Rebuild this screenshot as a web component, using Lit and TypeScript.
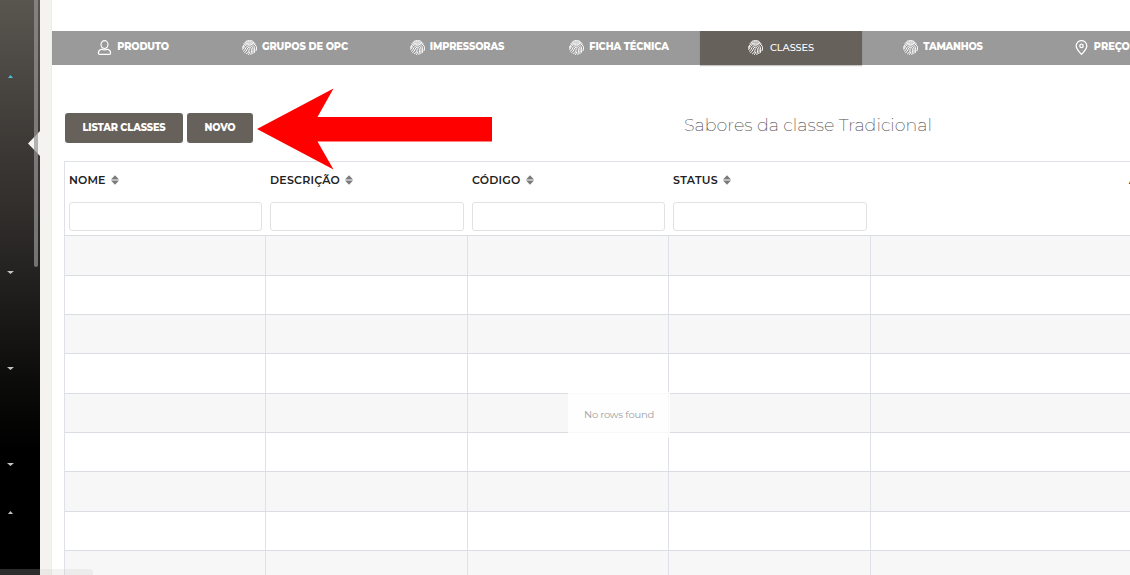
import { LitElement, html, svg, css } from "lit";
import { customElement, property } from "lit/decorators.js";

/** Single-line label whose tracking is adjusted so it spans a given width. */
@customElement("fit-label")
class FitLabel extends LitElement {
  @property({ type: Number }) width = 0;
  @property() text = "";
  static styles = css`
    :host { display: inline-block; white-space: pre; }
    .t { display: inline-block; }
  `;
  render() {
    return html`<span class="t">${this.text}</span>`;
  }
  updated() {
    const el = this.renderRoot.querySelector(".t") as HTMLElement;
    el.style.letterSpacing = "0";
    const natural = el.getBoundingClientRect().width;
    const gap = (this.width - natural) / this.text.length;
    el.style.letterSpacing = `${gap.toFixed(3)}px`;
  }
}

const userIcon = svg`<g fill="none" stroke="#fff" stroke-width="1.2">
  <ellipse cx="7.5" cy="4.600" rx="3.500" ry="3.900"/>
  <path d="M4.300 9.300C2.400 9.900 1.400 11.200 1.400 13c0 .8.5 1.300 1.300 1.300h9.600c.8 0 1.300-.5 1.300-1.300 0-1.800-1-3.100-2.900-3.700-2 .8-4.400.8-6.400 0z"/></g>`;

const printIcon = svg`<g fill="none" stroke="#fff" stroke-width="1" stroke-linecap="round">
  <path d="M4 1.300C6.200.3 8.800.3 11 1.300"/>
  <path d="M1.700 3.700C4.600 1 10.400 1 13.300 3.700"/>
  <path d="M.6 7C1.600 2.200 12.400 1.300 14.300 6.500 14.800 8.500 14.500 9.500 14 10.700"/>
  <path d="M.8 9.500C2.300 8.300 1.700 4.200 7.500 4.200c4.800 0 5.600 3.600 5 8.200"/>
  <path d="M1.500 11.200C4.200 10 2.800 5.700 7.500 5.700c4 0 3.900 4 3.300 7.900"/>
  <path d="M2.700 12.700C5.800 11.300 4.400 7.200 7.500 7.200c2.500 0 2.200 3.800 1.400 7.300"/>
  <path d="M4.500 13.800C6.800 12.800 6.800 10.800 7.300 8.900"/>
  <path d="M6.600 14.500C7.200 13.800 7.400 13 7.600 12"/>
  <path d="M.7 8.300C.8 7.600 1.100 6.800 1.500 6"/></g>`;

const pinIcon = svg`<g fill="none" stroke="#fff" stroke-width="1.300">
  <path d="M7.500 14.400C4.500 11.200 2.200 8.600 2.200 5.900a5.300 5.300 0 0 1 10.600 0c0 2.700-2.300 5.300-5.300 8.500z"/>
  <circle cx="7.500" cy="5.900" r="1.700"/></g>`;

const tabs = [
  { text: "PRODUTO", width: 51.5, icon: userIcon },
  { text: "GRUPOS DE OPC", width: 86, icon: printIcon },
  { text: "IMPRESSORAS", width: 74.5, icon: printIcon },
  { text: "FICHA TÉCNICA", width: 79.5, icon: printIcon },
  { text: "CLASSES", width: 44, icon: printIcon, active: true },
  { text: "TAMANHOS", width: 59.5, icon: printIcon },
  { text: "PREÇOS", width: 42.5, icon: pinIcon },
];

const columns = [
  { text: "NOME", width: 36.5 },
  { text: "DESCRIÇÃO", width: 70 },
  { text: "CÓDIGO", width: 48.5 },
  { text: "STATUS", width: 45 },
];

@customElement("app-root")
class AppRoot extends LitElement {
  static styles = css`
    :host {
      display: block; height: 575px; overflow: hidden; position: relative; background: #fff;
      font-family: Montserrat, Inter, "Open Sans", sans-serif; color: #212121;
    }
    * { box-sizing: border-box; }
    .shell { display: grid; grid-template-columns: 40px 12px 1078px; height: 575px; }
    .side {
      position: relative; overflow: hidden;
      background: linear-gradient(#59554f 0, #3a3633 160px, #292725 250px, #0a0a09 390px, #000 450px);
    }
    .gutter { background: #f4f3ef; border-right: 1px solid #eeece6; }
    .notch { position: absolute; left: 28px; top: 131px; display: block; }
    .thumb {
      position: absolute; left: 34px; top: 0; width: 4px; height: 267px;
      background: rgba(150, 150, 150, .7); border-radius: 0 0 2px 2px;
    }
    .caret { position: absolute; left: 7px; width: 7px; height: 3px; background: #c4c4c2; }
    .down { clip-path: polygon(0 0, 100% 0, 50% 100%); }
    .up { clip-path: polygon(50% 0, 100% 100%, 0 100%); width: 5px; left: 8px; }
    .blue { background: #51bcda; }
    .main { overflow: hidden; padding-top: 31px; }
    .tabs { display: flex; width: 1134px; height: 34px; background: #9a9a9a; }
    .tab {
      width: 162px; height: 34px; display: flex; justify-content: center; align-items: center;
      gap: 5px; color: #fff; font-size: 9.800px; font-weight: 800; line-height: 12px;
    }
    .tab svg { flex: none; margin-bottom: 1px; }
    .tab fit-label { margin-bottom: 2px; }
    .tab.active { background: #66615b; font-size: 9.800px; font-weight: 500; gap: 7px; box-shadow: 0 1px 1px rgba(102, 97, 91, .35); }
    .tab.active fit-label { margin-bottom: 0; }
    .bar { display: flex; gap: 4px; padding: 48px 0 0 13px; height: 96px; }
    .btn {
      height: 30px; border: 0; border-radius: 3px; padding: 0; background: #66615b; color: #fff;
      font: 800 9.800px/30px Montserrat, Inter, sans-serif; text-align: center;
    }
    .list { width: 118px; }
    .new { width: 66px; }
    .title { margin: 0 0 0 427px; padding-top: 1px; font-weight: 200; font-size: 17.500px; line-height: 22px; color: #4c4c50; }
    .table { margin-left: 12px; width: 1100px; border: 1px solid #dee2e6; position: relative; }
    .row { display: grid; grid-template-columns: 201px 202px 201px 202px 1fr; }
    .head { height: 73.300px; }
    .cell { padding: 12px 4px 0; }
    .name { display: flex; align-items: center; gap: 5px; height: 13px; font-size: 11px; font-weight: 600; line-height: 13px; }
    .name svg { display: block; margin-bottom: 1px; }
    .actions { padding-left: 258px; }
    .filter {
      display: block; width: 100%; height: 29px; margin-top: 15px; padding: 0 6px;
      border: 1px solid #e2e2e2; border-radius: 3px; background: #fff; outline: 0;
    }
    .data { height: 39.350px; border-top: 1px solid #dadde1; }
    .data:nth-child(even) { background: #f7f7f7; }
    .data span { border-right: 1px solid #dee2e6; }
    .empty {
      position: absolute; left: 503px; top: 230px; width: 102px; height: 46px; padding-top: 16px;
      background: rgba(255, 255, 255, .8); text-align: center; font-size: 10px; line-height: 13px; color: #a0a0a0;
    }
    .arrow { position: absolute; left: 257px; top: 88px; display: block; }
    .status {
      position: absolute; left: 0; top: 569px; width: 93px; height: 6px;
      border-radius: 0 4px 0 0; background: rgba(200, 200, 200, .22);
    }
  `;

  render() {
    return html`
      <div class="shell">
        <nav class="side">
          <svg class="notch" width="12" height="25" viewBox="0 0 12 25"><path d="M12 0v25L0 12.500z" fill="#f4f3ef" /></svg>
          <div class="thumb"></div>
          <i class="caret up blue" style="top:75px"></i>
          <i class="caret down" style="top:271px"></i>
          <i class="caret down" style="top:367px"></i>
          <i class="caret down" style="top:463px"></i>
          <i class="caret up" style="top:511px"></i>
        </nav>
        <div class="gutter"></div>
        <main class="main">
          <div class="tabs">
            ${tabs.map(
              (t) => html`<div class="tab ${t.active ? "active" : ""}">
                <svg width="15" height="15" viewBox="0 0 15 15">${t.icon}</svg>
                <fit-label .text=${t.text} .width=${t.width}></fit-label>
              </div>`
            )}
          </div>
          <div class="bar">
            <button class="btn list"><fit-label .text=${"LISTAR CLASSES"} .width=${83}></fit-label></button>
            <button class="btn new"><fit-label .text=${"NOVO"} .width=${31}></fit-label></button>
            <h5 class="title"><fit-label .text=${"Sabores da classe Tradicional"} .width=${248}></fit-label></h5>
          </div>
          <div class="table">
            <div class="row head">
              ${columns.map(
                (c) => html`<div class="cell">
                  <div class="name">
                    <fit-label .text=${c.text} .width=${c.width}></fit-label>
                    <svg width="8" height="10" viewBox="0 0 8 10" fill="#7a7a7a"><path d="M0 4.500L4 .3 8 4.500zM0 5.500h8L4 9.700z" /></svg>
                  </div>
                  <input class="filter" />
                </div>`
              )}
              <div class="cell actions"><div class="name">AÇÕES</div></div>
            </div>
            ${Array.from({ length: 9 }, () => html`<div class="row data"><span></span><span></span><span></span><span></span></div>`)}
            <div class="empty"><fit-label .text=${"No rows found"} .width=${70}></fit-label></div>
          </div>
        </main>
      </div>
      <svg class="arrow" width="236" height="82" viewBox="0 0 236 82"><path d="M0 41L76.500 .500 60.500 29h174.500v24.500H60.500L76.500 81.500z" fill="#f00" /></svg>
      <div class="status"></div>
    `;
  }
}
